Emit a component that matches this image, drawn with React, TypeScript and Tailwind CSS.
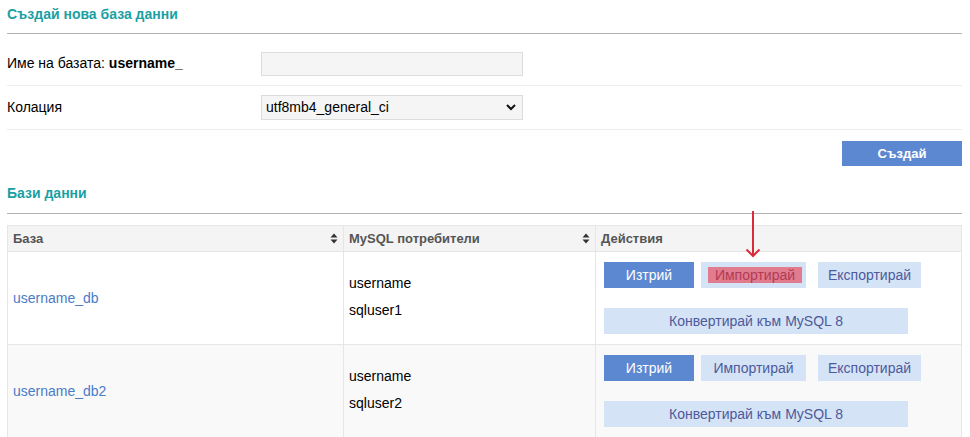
import React from "react";

const font = { fontFamily: "Tahoma, 'Liberation Sans', 'DejaVu Sans', sans-serif" };

function SortIcon() {
  return (
    <svg width="8" height="11" viewBox="0 0 8 11" className="shrink-0">
      <path d="M4 0.5 L7.5 4.5 H0.5 Z" fill="#333" />
      <path d="M4 10.5 L7.5 6.5 H0.5 Z" fill="#333" />
    </svg>
  );
}

type Db = { name: string; users: string[]; shade: boolean; highlight: boolean };

const dbs: Db[] = [
  { name: "username_db", users: ["username", "sqluser1"], shade: false, highlight: true },
  { name: "username_db2", users: ["username", "sqluser2"], shade: true, highlight: false }
];

function LightButton({ children, className }: { children: React.ReactNode; className?: string }) {
  return (
    <button className={"h-[26px] bg-[#d4e3f5] text-[14px] text-[#4d5a9c] " + (className ?? "")}>{children}</button>
  );
}

function DbRow({ db }: { db: Db }) {
  return (
    <tr className={db.shade ? "bg-[#f9f9f9]" : "bg-white"}>
      <td className="h-[93px] border border-[#e6e6e6] px-[5px] align-middle">
        <a className="text-[14px] text-[#4a7cc7]">{db.name}</a>
      </td>
      <td className="border border-[#e6e6e6] px-[5px] align-middle">
        <div className="flex flex-col gap-[6px] pb-[2px] text-[14px] text-black">
          {db.users.map((u) => (
            <div key={u}>{u}</div>
          ))}
        </div>
      </td>
      <td className="relative border border-[#e6e6e6] px-[7px] align-middle">
        <div className="flex gap-[7px] pl-px">
          <button className="h-[26px] w-[90px] bg-[#5b88d1] text-[14px] text-white">Изтрий</button>
          {db.highlight ? (
            <div className="flex h-[26px] w-[105px] items-center bg-[#d4e3f5] pl-[7px] pr-[4px]">
              <span className="flex h-[16px] w-full items-center justify-center bg-[#e07c8e] text-[14px] text-[#b23a55]">
                Импортирай
              </span>
            </div>
          ) : (
            <LightButton className="w-[105px]">Импортирай</LightButton>
          )}
          <LightButton className="ml-[5px] w-[103px]">Експортирай</LightButton>
        </div>
        <div className="mt-[20px] pl-px">
          <LightButton className="w-[304px]">Конвертирай към MySQL 8</LightButton>
        </div>
      </td>
    </tr>
  );
}

export default function App() {
  return (
    <div className="relative h-[437px] w-[970px] overflow-hidden bg-white px-[7px]" style={font}>
      <div className="w-[955px]">
        <div className="border-b border-[#b3b3b3] pb-[8px] pt-[4px] text-[14px] font-bold text-[#1a9fa3]">
          Създай нова база данни
        </div>
        <div className="mt-[8px] flex h-[44px] items-center border-b border-[#ececec]">
          <div className="w-[254px] text-[14px] text-black">
            Име на базата: <b>username_</b>
          </div>
          <input className="h-[24px] w-[262px] border border-[#dcdcdc] bg-[#f5f5f5] outline-none" />
        </div>
        <div className="flex h-[44px] items-center border-b border-[#ececec]">
          <div className="w-[254px] text-[14px] text-black">Колация</div>
          <div className="flex h-[25px] w-[262px] items-center justify-between border border-[#dcdcdc] bg-[#f5f5f5] pl-[4px] pr-[6px] text-[14px] text-black">
            <span>utf8mb4_general_ci</span>
            <svg width="10" height="7" viewBox="0 0 10 7">
              <path d="M1 1 L5 5 L9 1" fill="none" stroke="#111" strokeWidth="2" />
            </svg>
          </div>
        </div>
        <div className="mt-[11px] flex justify-end">
          <button className="h-[25px] w-[120px] bg-[#5b88d1] text-[13px] font-bold text-white">Създай</button>
        </div>
        <div className="mt-[17px] border-b border-[#b3b3b3] pb-[9px] text-[14px] font-bold text-[#1a9fa3]">
          Бази данни
        </div>
        <table className="mt-[11px] w-[955px] border-collapse">
          <thead>
            <tr className="bg-[#f4f4f4] text-[13px] font-bold text-[#555]">
              <th className="h-[26px] w-[336px] border border-[#e6e6e6] px-[5px] text-left">
                <div className="flex items-center justify-between">
                  <span>База</span>
                  <SortIcon />
                </div>
              </th>
              <th className="w-[252px] border border-[#e6e6e6] px-[5px] text-left">
                <div className="flex items-center justify-between">
                  <span>MySQL потребители</span>
                  <SortIcon />
                </div>
              </th>
              <th className="border border-[#e6e6e6] px-[5px] text-left">Действия</th>
            </tr>
          </thead>
          <tbody>
            {dbs.map((db) => (
              <DbRow key={db.name} db={db} />
            ))}
          </tbody>
        </table>
      </div>
      <svg className="absolute left-[745px] top-[211px]" width="16" height="47" viewBox="0 0 16 47">
        <path d="M8 0 V45" stroke="#d92b3a" strokeWidth="2" />
        <path d="M1.5 38.5 L8 45 L14.5 38.5" fill="none" stroke="#d92b3a" strokeWidth="2" />
      </svg>
    </div>
  );
}
